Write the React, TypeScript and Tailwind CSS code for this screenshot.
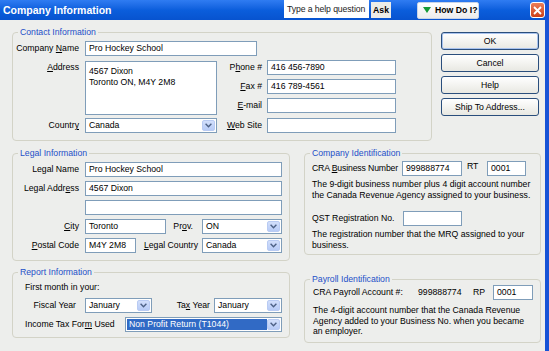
import React from "react";

type Kids = { children?: React.ReactNode };

function Group({ title, className = "", children }: Kids & { title: string; className?: string }) {
  return (
    <div className={`rounded-[4px] border border-[#D3D3C7] ${className}`}>
      <div className="-mt-[6px] ml-[5px] h-[11px] w-fit bg-[#EDEEEC] px-[2px] leading-[11px] text-[#1E50C8]">
        {title}
      </div>
      {children}
    </div>
  );
}

function Field({ w, children }: Kids & { w: string }) {
  return (
    <div className={`${w} flex h-[15px] shrink-0 items-center border border-[#7F9DB9] bg-white pl-[3px] leading-none`}>
      {children}
    </div>
  );
}

function Chevron() {
  return (
    <svg width="7" height="5" viewBox="0 0 7 5">
      <path d="M0.6 0.8 L3.5 3.7 L6.4 0.8" stroke="#4D6185" strokeWidth="1.4" fill="none" />
    </svg>
  );
}

function Select({ w, value, selected }: { w: string; value: string; selected?: boolean }) {
  return (
    <div className={`${w} flex h-[15px] shrink-0 border border-[#7F9DB9] bg-white p-[1px]`}>
      <div
        className={`flex flex-1 items-center pl-[2px] leading-none ${
          selected ? "bg-[#316AC5] text-white" : ""
        }`}
      >
        {value}
      </div>
      <div className="flex w-[13px] items-center justify-center rounded-[2px] border border-[#B9CBF3] bg-linear-to-b from-[#D2DFFB] to-[#B7CBF6]">
        <Chevron />
      </div>
    </div>
  );
}

function Btn({ children, def }: Kids & { def?: boolean }) {
  return (
    <div
      className={`flex h-[18px] items-center justify-center rounded-[3px] border border-[#2A4E7C] bg-linear-to-b from-white to-[#E8E8E2] ${
        def ? "shadow-[inset_0_0_0_1px_#A9C3EE]" : ""
      }`}
    >
      {children}
    </div>
  );
}

function TitleBar() {
  return (
    <div className="flex h-[20px] items-center bg-linear-to-b from-[#2F7CF2] via-[#0B5EDC] to-[#0753CF]">
      <div className="pl-[3px] text-[10.5px] font-bold text-white">Company Information</div>
      <div className="ml-auto flex h-full items-center">
        <div className="flex h-[18px] w-[85px] items-center self-start whitespace-nowrap bg-white pl-[3px] tracking-[-0.1px] text-[#222]">
          Type a help question
        </div>
        <div className="ml-[2px] flex h-[16px] w-[20px] items-center justify-center bg-[#ECECE8] font-bold">
          Ask
        </div>
        <div className="ml-[26px] flex h-[17px] w-[62px] items-center gap-[4px] rounded-[2px] border border-[#C9D4E6] bg-linear-to-b from-white to-[#ECECEC] pl-[5px] font-bold">
          <svg width="8" height="6" viewBox="0 0 8 6">
            <path d="M0 0 H8 L4 6 Z" fill="#149A36" />
          </svg>
          How Do I?
        </div>
        <div className="ml-[51px] flex h-[16px] w-[15px] items-center justify-center rounded-[3px] border border-white bg-linear-to-b from-[#EC7E58] to-[#CC3D14]">
          <svg width="9" height="9" viewBox="0 0 9 9">
            <path d="M1 1 L8 8 M8 1 L1 8" stroke="white" strokeWidth="1.8" />
          </svg>
        </div>
      </div>
    </div>
  );
}

export default function App() {
  return (
    <div className="h-[351px] w-[549px] overflow-hidden border-r-4 border-[#1652D6] bg-[#EDEEEC] font-['Liberation_Sans',sans-serif] text-[8.7px] leading-[10.5px] text-black">
      <TitleBar />

      <div className="pl-[12px] pt-[12px]">
        {/* top row: contact + buttons */}
        <div className="flex items-start">
          <Group title="Contact Information" className="w-[420px] pb-[7px]">
            <div className="mt-[3px] flex items-center">
              <div className="w-[66px] text-right">
                Company <u>N</u>ame
              </div>
              <div className="ml-[6px]">
                <Field w="w-[172px]">Pro Hockey School</Field>
              </div>
            </div>
            <div className="mt-[4px] flex">
              <div className="w-[204px] pt-[1px]">
                <div className="flex">
                  <div className="w-[66px] pt-[1px] text-right">
                    <u>A</u>ddress
                  </div>
                  <div className="ml-[6px] h-[54px] w-[132px] border border-[#7F9DB9] bg-white pl-[3px] pt-[4px]">
                    <div>4567 Dixon</div>
                    <div>Toronto ON, M4Y 2M8</div>
                  </div>
                </div>
                <div className="mt-[3px] flex items-center">
                  <div className="w-[66px] text-right">
                    Countr<u>y</u>
                  </div>
                  <div className="ml-[6px]">
                    <Select w="w-[132px]" value="Canada" />
                  </div>
                </div>
              </div>
              <div className="flex flex-col">
                <div className="flex items-center">
                  <div className="w-[45px] text-right">
                    P<u>h</u>one #
                  </div>
                  <div className="ml-[5px]">
                    <Field w="w-[129px]">416 456-7890</Field>
                  </div>
                </div>
                <div className="mt-[4px] flex items-center">
                  <div className="w-[45px] text-right">
                    <u>F</u>ax #
                  </div>
                  <div className="ml-[5px]">
                    <Field w="w-[129px]">416 789-4561</Field>
                  </div>
                </div>
                <div className="mt-[4px] flex items-center">
                  <div className="w-[45px] text-right">
                    <u>E</u>-mail
                  </div>
                  <div className="ml-[5px]">
                    <Field w="w-[129px]" />
                  </div>
                </div>
                <div className="mt-[5px] flex items-center">
                  <div className="w-[45px] text-right">
                    <u>W</u>eb Site
                  </div>
                  <div className="ml-[5px]">
                    <Field w="w-[129px]" />
                  </div>
                </div>
              </div>
            </div>
          </Group>

          <div className="ml-[9px] flex w-[98px] flex-col gap-[4px]">
            <Btn def>OK</Btn>
            <Btn>Cancel</Btn>
            <Btn>Help</Btn>
            <Btn>Ship To Address...</Btn>
          </div>
        </div>

        {/* lower area */}
        <div className="mt-[12px] flex items-start">
          <div className="flex w-[278px] flex-col">
            <Group title="Legal Information" className="pb-[7px]">
              <div className="mt-[3px] flex items-center">
                <div className="w-[66px] text-right">Legal Name</div>
                <div className="ml-[6px]">
                  <Field w="w-[197px]">Pro Hockey School</Field>
                </div>
              </div>
              <div className="mt-[4px] flex items-center">
                <div className="w-[66px] text-right">
                  Legal Addr<u>e</u>ss
                </div>
                <div className="ml-[6px]">
                  <Field w="w-[197px]">4567 Dixon</Field>
                </div>
              </div>
              <div className="ml-[72px] mt-[4px]">
                <Field w="w-[197px]" />
              </div>
              <div className="mt-[4px] flex items-center">
                <div className="w-[66px] text-right">
                  <u>C</u>ity
                </div>
                <div className="ml-[6px]">
                  <Field w="w-[81px]">Toronto</Field>
                </div>
                <div className="w-[36px] pr-[9px] text-right">
                  Pr<u>o</u>v.
                </div>
                <Select w="w-[80px]" value="ON" />
              </div>
              <div className="mt-[4px] flex items-center">
                <div className="w-[66px] text-right">
                  <u>P</u>ostal Code
                </div>
                <div className="ml-[6px]">
                  <Field w="w-[51px]">M4Y 2M8</Field>
                </div>
                <div className="w-[66px] pr-[4px] text-right">
                  <u>L</u>egal Country
                </div>
                <Select w="w-[80px]" value="Canada" />
              </div>
            </Group>

            <Group title="Report Information" className="mt-[11px] pb-[5px]">
              <div className="mt-[4px] pl-[12px]">First month in your:</div>
              <div className="mt-[5px] flex items-center">
                <div className="w-[63px] text-right">Fiscal Year</div>
                <div className="ml-[9px]">
                  <Select w="w-[67px]" value="January" />
                </div>
                <div className="w-[58px] text-right">
                  Ta<u>x</u> Year
                </div>
                <div className="ml-[4px]">
                  <Select w="w-[68px]" value="January" />
                </div>
              </div>
              <div className="mt-[4px] flex items-center">
                <div className="w-[112px] pl-[12px]">
                  Income Tax For<u>m</u> Used
                </div>
                <Select w="w-[157px]" value="Non Profit Return (T1044)" selected />
              </div>
            </Group>
          </div>

          <div className="ml-[14px] flex w-[237px] flex-col">
            <Group title="Company Identification" className="pb-[4px]">
              <div className="mt-[2px] flex items-center pl-[7px]">
                <div className="w-[90px] tracking-[-0.15px]">
                  CRA <u>B</u>usiness Number
                </div>
                <Field w="w-[60px]">999888774</Field>
                <div className="mb-[4px] w-[25px] pl-[5px]">RT</div>
                <Field w="w-[39px]">0001</Field>
              </div>
              <div className="mt-[3px] pl-[7px] pr-[4px]">
                The 9-digit business number plus 4 digit account number the Canada Revenue Agency
                assigned to your business.
              </div>
              <div className="mt-[11px] flex items-center pl-[7px]">
                <div className="w-[91px]">QST Registration No.</div>
                <Field w="w-[59px]" />
              </div>
              <div className="mt-[3px] pl-[7px] pr-[8px]">
                The registration number that the MRQ assigned to your business.
              </div>
            </Group>

            <Group title="Payroll Identification" className="mt-[24px] pb-[5px]">
              <div className="flex items-center pl-[8px]">
                <div className="w-[105px]">CRA Payroll Account #:</div>
                <div className="w-[55px]">999888774</div>
                <div className="w-[20px]">RP</div>
                <Field w="w-[40px]">0001</Field>
              </div>
              <div className="mt-[5px] pl-[8px] pr-[10px]">
                The 4-digit account number that the Canada Revenue Agency added to your Business No.
                when you became an employer.
              </div>
            </Group>
          </div>
        </div>
      </div>
    </div>
  );
}
